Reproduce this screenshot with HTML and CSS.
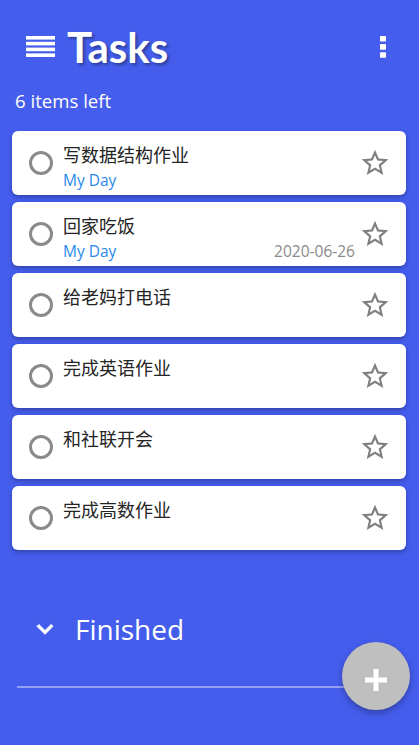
FILE: index.html
```html
<!DOCTYPE html>
<html lang="zh-CN">
<head>
<meta charset="utf-8">
<title>Tasks</title>
<link rel="stylesheet" href="styles.css">
</head>
<body>
<div class="app">
  <header class="topbar">
    <svg class="menu-icon" width="29" height="21" viewBox="0 0 29 21"><rect x="0" y="0" width="29" height="3.6"/><rect x="0" y="5.8" width="29" height="3.6"/><rect x="0" y="11.6" width="29" height="3.6"/><rect x="0" y="17.4" width="29" height="3.6"/></svg>
    <h1 class="title">Tasks</h1>
    <svg class="more-icon" width="6" height="22" viewBox="0 0 6 22"><rect x="0" y="0" width="6" height="5.6" rx="0.8"/><rect x="0" y="8.1" width="6" height="5.6" rx="0.8"/><rect x="0" y="16.2" width="6" height="5.6" rx="0.8"/></svg>
  </header>
  <div class="count">6 items left</div>
  <ul class="list">
    <li class="card">
      <span class="check"></span>
      <div class="body">
        <div class="name">写数据结构作业</div>
        <div class="meta"><span class="tag">My Day</span></div>
      </div>
      <svg class="star" width="32" height="32" viewBox="0 0 24 24"><path d="M22 9.24l-7.19-.62L12 2 9.19 8.63 2 9.24l5.46 4.73L5.82 21 12 17.27 18.18 21l-1.63-7.03L22 9.24zM12 15.4l-3.76 2.27 1-4.28-3.32-2.88 4.38-.38L12 6.1l1.71 4.04 4.38.38-3.32 2.88 1 4.28L12 15.4z"/></svg>
    </li>
    <li class="card">
      <span class="check"></span>
      <div class="body">
        <div class="name">回家吃饭</div>
        <div class="meta"><span class="tag">My Day</span><span class="date">2020-06-26</span></div>
      </div>
      <svg class="star" width="32" height="32" viewBox="0 0 24 24"><path d="M22 9.24l-7.19-.62L12 2 9.19 8.63 2 9.24l5.46 4.73L5.82 21 12 17.27 18.18 21l-1.63-7.03L22 9.24zM12 15.4l-3.76 2.27 1-4.28-3.32-2.88 4.38-.38L12 6.1l1.71 4.04 4.38.38-3.32 2.88 1 4.28L12 15.4z"/></svg>
    </li>
    <li class="card">
      <span class="check"></span>
      <div class="body">
        <div class="name">给老妈打电话</div>
      </div>
      <svg class="star" width="32" height="32" viewBox="0 0 24 24"><path d="M22 9.24l-7.19-.62L12 2 9.19 8.63 2 9.24l5.46 4.73L5.82 21 12 17.27 18.18 21l-1.63-7.03L22 9.24zM12 15.4l-3.76 2.27 1-4.28-3.32-2.88 4.38-.38L12 6.1l1.71 4.04 4.38.38-3.32 2.88 1 4.28L12 15.4z"/></svg>
    </li>
    <li class="card">
      <span class="check"></span>
      <div class="body">
        <div class="name">完成英语作业</div>
      </div>
      <svg class="star" width="32" height="32" viewBox="0 0 24 24"><path d="M22 9.24l-7.19-.62L12 2 9.19 8.63 2 9.24l5.46 4.73L5.82 21 12 17.27 18.18 21l-1.63-7.03L22 9.24zM12 15.4l-3.76 2.27 1-4.28-3.32-2.88 4.38-.38L12 6.1l1.71 4.04 4.38.38-3.32 2.88 1 4.28L12 15.4z"/></svg>
    </li>
    <li class="card">
      <span class="check"></span>
      <div class="body">
        <div class="name">和社联开会</div>
      </div>
      <svg class="star" width="32" height="32" viewBox="0 0 24 24"><path d="M22 9.24l-7.19-.62L12 2 9.19 8.63 2 9.24l5.46 4.73L5.82 21 12 17.27 18.18 21l-1.63-7.03L22 9.24zM12 15.4l-3.76 2.27 1-4.28-3.32-2.88 4.38-.38L12 6.1l1.71 4.04 4.38.38-3.32 2.88 1 4.28L12 15.4z"/></svg>
    </li>
    <li class="card">
      <span class="check"></span>
      <div class="body">
        <div class="name">完成高数作业</div>
      </div>
      <svg class="star" width="32" height="32" viewBox="0 0 24 24"><path d="M22 9.24l-7.19-.62L12 2 9.19 8.63 2 9.24l5.46 4.73L5.82 21 12 17.27 18.18 21l-1.63-7.03L22 9.24zM12 15.4l-3.76 2.27 1-4.28-3.32-2.88 4.38-.38L12 6.1l1.71 4.04 4.38.38-3.32 2.88 1 4.28L12 15.4z"/></svg>
    </li>
  </ul>
  <section class="finished">
    <svg class="chevron" width="32" height="32" viewBox="0 0 24 24"><path d="M16.59 8.59L12 13.17 7.41 8.59 6 10l6 6 6-6z"/></svg>
    <span class="finished-label">Finished</span>
  </section>
  <div class="divider"></div>
  <button class="fab" type="button" aria-label="Add">
    <svg width="22" height="22" viewBox="0 0 22 22"><rect x="0" y="8.5" width="22" height="5"/><rect x="8.5" y="0" width="5" height="22"/></svg>
  </button>
</div>
</body>
</html>
```
FILE: styles.css
```css
html, body {
  margin: 0;
  padding: 0;
  background: #445dec;
}

body {
  font-family: "Open Sans", "Noto Sans CJK SC", sans-serif;
  color: #ffffff;
}

.app {
  position: relative;
  width: 419px;
  height: 745px;
  overflow: hidden;
}

.topbar {
  display: flex;
  align-items: center;
  height: 40px;
  padding: 27px 33px 0 26px;
}

.menu-icon {
  fill: #ffffff;
  flex: none;
  margin-bottom: 2px;
}

.title {
  margin: 0 0 0 12px;
  font-family: "Lato", sans-serif;
  font-weight: 700;
  font-size: 42px;
  line-height: 40px;
  color: #ffffff;
  text-shadow: 2px 2px 3px rgba(0, 0, 0, 0.35);
}

.more-icon {
  fill: #ffffff;
  margin-left: auto;
  flex: none;
}

.count {
  margin-top: 22px;
  padding-left: 15px;
  font-size: 18.6px;
  line-height: 24px;
  font-weight: 500;
}

.list {
  list-style: none;
  margin: 18px 13px 0 12px;
  padding: 0;
  display: flex;
  flex-direction: column;
  gap: 7px;
}

.card {
  height: 64px;
  background: #ffffff;
  border-radius: 6px;
  box-shadow: 0 2px 4px rgba(0, 0, 0, 0.28);
  display: flex;
  align-items: center;
}

.check {
  flex: none;
  width: 18px;
  height: 18px;
  border: 3px solid #8a8a8a;
  border-radius: 50%;
  margin-left: 17px;
}

.body {
  flex: 1;
  align-self: flex-start;
  margin: 0 4px 0 10px;
  padding-top: 11px;
}

.name {
  font-family: "Noto Sans CJK SC", sans-serif;
  font-size: 18px;
  line-height: 24px;
  color: #242424;
}

.meta {
  display: flex;
  justify-content: space-between;
  margin-top: 4px;
  font-size: 15.5px;
  line-height: 20px;
}

.tag {
  color: #2a88ec;
}

.date {
  color: #8a8a8a;
}

.star {
  flex: none;
  fill: #7f7f7f;
  margin-right: 15px;
}

.finished {
  display: flex;
  align-items: center;
  height: 40px;
  margin-top: 59px;
  padding-left: 29px;
}

.chevron {
  fill: #ffffff;
  stroke: #ffffff;
  stroke-width: 0.7;
  stroke-linejoin: round;
  flex: none;
}

.finished-label {
  margin-left: 14px;
  font-size: 28px;
  line-height: 40px;
}

.divider {
  height: 2px;
  margin: 37px 17px 0 17px;
  background: rgba(255, 255, 255, 0.42);
}

.fab {
  position: absolute;
  left: 342px;
  top: 642px;
  width: 68px;
  height: 68px;
  border: none;
  border-radius: 50%;
  padding: 8px 0 0 0;
  background: #bfbfbf;
  box-shadow: 0 3px 6px rgba(0, 0, 0, 0.3);
  display: flex;
  align-items: center;
  justify-content: center;
}

.fab svg {
  fill: #ffffff;
}
```
